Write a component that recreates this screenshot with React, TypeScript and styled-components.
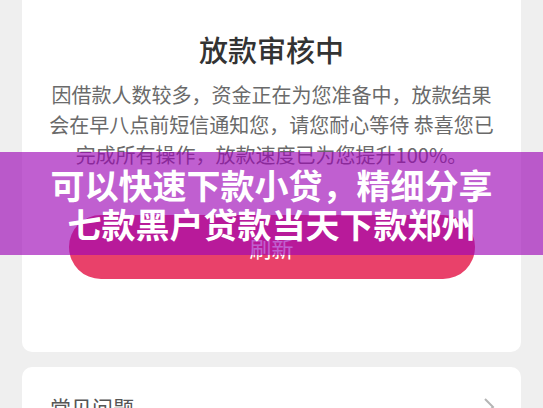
import React from 'react'
import styled, { createGlobalStyle } from 'styled-components'

const GlobalStyle = createGlobalStyle`
  html, body {
    margin: 0;
    padding: 0;
    background: #efefef;
    font-family: "Noto Sans CJK SC", "Noto Sans", sans-serif;
  }
`

const Page = styled.div`
  position: relative;
  padding: 0 22px 40px;
  overflow: hidden;
`

const Card = styled.div`
  background: #ffffff;
  border-radius: 10px;
`

const StatusCard = styled(Card)`
  margin-top: -95px;
  padding: 10px 24px 73px;
  display: flex;
  flex-direction: column;
  align-items: center;
`

const Illustration = styled.svg`
  display: block;
  width: 120px;
  height: 84px;
`

const Title = styled.h1`
  margin: 30px 0 0;
  font-size: 29px;
  line-height: 40px;
  font-weight: 500;
  color: #333333;
`

const Desc = styled.p`
  margin: 11px 0 0;
  font-size: 20px;
  line-height: 30px;
  color: #6a6a6a;
  text-align: center;
`

const RefreshButton = styled.button`
  margin-top: 45px;
  width: 406px;
  height: 64px;
  border: none;
  border-radius: 32px;
  background: #e9416a;
  color: #ffffff;
  font-family: inherit;
  font-size: 22px;
`

const FaqCard = styled(Card)`
  margin-top: 15px;
  padding: 0 26px 0 28px;
`

const FaqRow = styled.div`
  display: flex;
  align-items: center;
  justify-content: space-between;
  height: 80px;
  font-size: 21px;
  color: #555555;
`

const Banner = styled.div`
  position: absolute;
  left: 0;
  right: 0;
  top: 152px;
  height: 103px;
  background: rgba(156, 5, 181, 0.64);
  display: flex;
  align-items: center;
  justify-content: center;
  text-align: center;
  color: #ffffff;
  font-size: 34px;
  line-height: 39px;
  font-weight: 700;
`

const Chevron = () => (
  <svg width="12" height="20" viewBox="0 0 12 20">
    <path d="M2 2l8 8-8 8" fill="none" stroke="#b5b5b5" strokeWidth="2" />
  </svg>
)

export default function App() {
  return (
    <>
      <GlobalStyle />
      <Page>
        <StatusCard>
          <Illustration viewBox="0 0 120 84">
            <circle cx="60" cy="40" r="30" fill="#fff7e0" />
            <ellipse cx="87" cy="83" rx="15" ry="2" fill="#f6efcf" />
          </Illustration>
          <Title>放款审核中</Title>
          <Desc>
            因借款人数较多，资金正在为您准备中，放款结果会在早八点前短信通知您，请您耐心等待 恭喜您已完成所有操作，放款速度已为您提升100%。
          </Desc>
          <RefreshButton>刷新</RefreshButton>
        </StatusCard>
        <FaqCard>
          <FaqRow>
            <span>常见问题</span>
            <Chevron />
          </FaqRow>
        </FaqCard>
        <Banner>
          可以快速下款小贷，精细分享
          <br />
          七款黑户贷款当天下款郑州
        </Banner>
      </Page>
    </>
  )
}
